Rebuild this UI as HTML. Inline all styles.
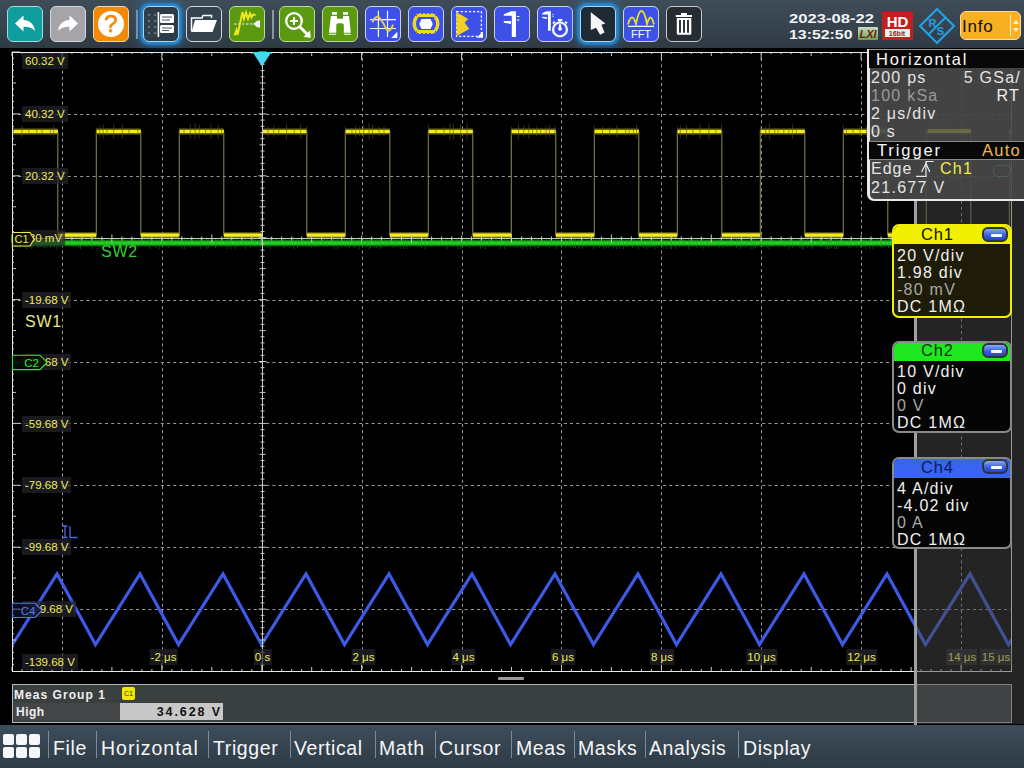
<!DOCTYPE html>
<html><head><meta charset="utf-8">
<style>
*{margin:0;padding:0;box-sizing:border-box}
html,body{width:1024px;height:768px;overflow:hidden;background:#000;font-family:"Liberation Sans",sans-serif}
.abs{position:absolute}
#tb{position:absolute;left:0;top:0;width:1024px;height:48px;background:linear-gradient(#3f4d58,#2f3a44)}
.btn{position:absolute;top:6px;width:36px;height:36px;border-radius:6px;border:1.5px solid #d8dde2;overflow:hidden}
.btn svg{position:absolute;left:-1.5px;top:-1.5px;width:36px;height:36px}
.sep{position:absolute;top:10px;width:2px;height:29px;background:#8a98a6}
.glow{box-shadow:0 0 2px 3px rgba(40,140,215,0.85),0 0 8px 5px rgba(35,125,200,0.55)}
#menu{position:absolute;left:0;top:725px;width:1024px;height:43px;background:linear-gradient(#3d4d5a,#2e3b46)}
.mi{position:absolute;top:736.5px;font-size:19.5px;color:#f4f6f8;letter-spacing:0.6px;white-space:nowrap}
.ms{position:absolute;top:731px;width:1px;height:27px;background:#7d8b98}
.vl{position:absolute;height:16px;background:rgba(36,36,44,0.7);color:#eeec58;font-size:11.5px;line-height:16px;white-space:nowrap;padding:0 3px}
.xl{padding:0 1.5px;transform:translateX(-50%)}
.panel{position:absolute;color:#e8e8e8;font-size:16px;white-space:nowrap}
</style></head><body>
<div id="tb"></div>
<!-- buttons -->
<div class="btn" style="left:7px;background:#0f9d9e;border-color:#9edede"><svg viewBox="0 0 36 36"><path d="M8 17.5 L16.5 9.5 V14 C22 14 27 17.5 28 25 C25 21.5 21 20.5 16.5 20.8 V25.5 Z" fill="#fff"/></svg></div>
<div class="btn" style="left:50px;background:#a5a5a9;border-color:#d6d6de"><svg viewBox="0 0 36 36"><path d="M28 17.5 L19.5 9.5 V14 C14 14 9 17.5 8 25 C11 21.5 15 20.5 19.5 20.8 V25.5 Z" fill="#fff"/></svg></div>
<div class="btn" style="left:93px;background:#f28a08;border-color:#f6d8a8"><svg viewBox="0 0 36 36"><circle cx="18" cy="18" r="13" fill="#fff"/><text x="18" y="26" text-anchor="middle" font-family="Liberation Sans" font-size="24" fill="#f28a08" stroke="#f28a08" stroke-width="0.6">?</text></svg></div>
<div class="sep" style="left:136px"></div>
<div class="btn glow" style="left:143px;background:#2e3c48;border-color:#a8d8f8"><svg viewBox="0 0 36 36"><path d="M4.5 9h3M6 7.5v3" stroke="#7a8896" stroke-width="0.8"/><path d="M4.5 15h3M6 13.5v3" stroke="#7a8896" stroke-width="0.8"/><path d="M4.5 21h3M6 19.5v3" stroke="#7a8896" stroke-width="0.8"/><path d="M4.5 27h3M6 25.5v3" stroke="#7a8896" stroke-width="0.8"/><path d="M10.5 9h3M12 7.5v3" stroke="#7a8896" stroke-width="0.8"/><path d="M10.5 15h3M12 13.5v3" stroke="#7a8896" stroke-width="0.8"/><path d="M10.5 21h3M12 19.5v3" stroke="#7a8896" stroke-width="0.8"/><path d="M10.5 27h3M12 25.5v3" stroke="#7a8896" stroke-width="0.8"/><circle cx="3" cy="12" r="0.6" fill="#6a7886"/><circle cx="3" cy="18" r="0.6" fill="#6a7886"/><circle cx="3" cy="24" r="0.6" fill="#6a7886"/><circle cx="3" cy="30" r="0.6" fill="#6a7886"/><circle cx="9" cy="12" r="0.6" fill="#6a7886"/><circle cx="9" cy="18" r="0.6" fill="#6a7886"/><circle cx="9" cy="24" r="0.6" fill="#6a7886"/><circle cx="9" cy="30" r="0.6" fill="#6a7886"/><rect x="14.6" y="6" width="1.6" height="25" fill="#fff"/><rect x="17" y="8" width="14" height="9" rx="1.5" fill="#fff"/><rect x="17" y="19" width="14" height="8" rx="1.5" fill="#fff"/><path d="M19 11h10M19 14h8M19 22h10M19 24.5h7" stroke="#3a4652" stroke-width="0.9"/></svg></div>
<div class="btn" style="left:186px;background:#34434e;border-color:#d0d6dc"><svg viewBox="0 0 36 36"><path d="M5.5 25.5 V12 H16 L17 9.5 H25.5 V12" fill="none" stroke="#fff" stroke-width="1.5"/><path d="M9 14 H31 L26.5 26 H5.5 Z" fill="#fff"/></svg></div>
<div class="btn" style="left:229px;background:#5b9a10;border-color:#b8dc98"><svg viewBox="0 0 36 36"><path d="M5 18 H24" stroke="#f0f0f0" stroke-width="1" stroke-dasharray="2.5 1.5"/><path d="M24 18 L28.5 14.5 H31 V21.5 H28.5 Z" fill="#f0f0f0"/><path d="M5.5 29.5 L7.5 24 L8.5 29 L13.5 6 L15 13 L17 6.5 L19 13 L21 7.5 L22.5 11.5 L24 8.5 L26.5 9" fill="none" stroke="#f2e820" stroke-width="1.9" stroke-linejoin="miter"/></svg></div>
<div class="sep" style="left:272px"></div>
<div class="btn" style="left:279px;background:#5b9a10;border-color:#b8dc98"><svg viewBox="0 0 36 36"><circle cx="15" cy="15" r="7.8" fill="none" stroke="#fff" stroke-width="2.3"/><path d="M15 11V19M11 15H19" stroke="#fff" stroke-width="2"/><path d="M20.8 20.8 L28.5 28.5" stroke="#fff" stroke-width="3"/><path d="M31.8 31.8 L24.5 31 L31 24.5 Z" fill="#fff"/></svg></div>
<div class="btn" style="left:322px;background:#5b9a10;border-color:#b8dc98"><svg viewBox="0 0 36 36"><path d="M10 6.1H15V8.7H10ZM21 6.1H26V8.7H21Z" fill="#fff"/><path d="M8.9 10 H15 V12.7 H21 V10 H27 L28.8 26.8 H21.8 V19 C21.8 17.6 20 17.3 18 17.3 C16 17.3 14.3 17.6 14.3 19 V26.8 H7 Z" fill="#fff"/><path d="M7 28.3H14M21.8 28.3H28.8" stroke="#fff" stroke-width="1.1"/></svg></div>
<div class="btn" style="left:365px;background:#3d50e8;border-color:#c8d0f8"><svg viewBox="0 0 36 36"><path d="M13.4 4.7V31M22.5 4.7V31M4.9 13.6H31M4.9 22.5H31" stroke="#fff" stroke-width="1.2"/><path d="M7.5 16.4 C9 12.5 10.5 10.8 12.4 10.8 C15 10.8 16.5 15 18.7 17.8 C20.5 21.5 21.5 24.8 23.4 24.8 C25.5 24.8 27 21 28.1 18.7" fill="none" stroke="#e0d040" stroke-width="1.9"/><path d="M32.3 25.8V31.9H26.3Z" fill="#fff"/></svg></div>
<div class="btn" style="left:408px;background:#3d50e8;border-color:#c8d0f8"><svg viewBox="0 0 36 36"><path d="M8.7 9.2 H27.2 M8.7 26 H27.2" stroke="#f0d820" stroke-width="3.8"/><path d="M9 7.6 H27 M9 27.6 H27" stroke="#3d50e8" stroke-width="1" stroke-dasharray="2 2"/><path d="M8.7 10.5 Q3.8 17.8 8.7 24.8 M27.3 10.5 Q32.2 17.8 27.3 24.8" fill="none" stroke="#f0d820" stroke-width="3.4"/><path d="M11.2 17.9 L13.5 12.9 H22.5 L24.8 17.9 L22.5 23 H13.5 Z" fill="#fff"/></svg></div>
<div class="btn" style="left:451px;background:#3d50e8;border-color:#c8d0f8"><svg viewBox="0 0 36 36"><rect x="5.6" y="5.6" width="24.8" height="24.8" fill="none" stroke="#fff" stroke-width="1.3" stroke-dasharray="2.2 1.9"/><path d="M5.2 6.1 L17.3 13.1 L13.6 16.4 L18.3 23 L5.6 30 Z" fill="#f0d020"/><path d="M32 25.5V31.8H25.7Z" fill="#fff"/></svg></div>
<div class="btn" style="left:494px;background:#3d50e8;border-color:#c8d0f8"><svg viewBox="0 0 36 36"><path d="M9.8 8.3 L17 5.2 H22 V31 H17.8 V9.8 H9.8 Z" fill="#fff"/><path d="M9.8 15 H17 V18 L9.8 16.8 Z" fill="#fff"/><path d="M23 10.5h2.3M23 14h2.3" stroke="#fff" stroke-width="1.1"/></svg></div>
<div class="btn" style="left:537px;background:#3d50e8;border-color:#c8d0f8"><svg viewBox="0 0 36 36"><path d="M5.2 7.2 L9.4 5.2 H13.8 V24.8 H11 V8.6 H5.2 Z" fill="#fff"/><path d="M5.2 10.8 L10 11.2 V12.9 L5.2 11.9 Z" fill="#fff"/><path d="M15.4 8.4h1.2M15.4 10.3h1.2" stroke="#fff" stroke-width="0.9"/><circle cx="23" cy="23.4" r="6.9" fill="none" stroke="#fff" stroke-width="2.2"/><path d="M23 14.5 V17 M20.8 14 H25.3 M16 17.5 L17.8 15.5 M30 17.5 L28.2 15.5" stroke="#fff" stroke-width="1.8"/><path d="M23 18.3 V22" stroke="#fff" stroke-width="2.2"/><circle cx="23" cy="22.8" r="1.9" fill="#fff"/></svg></div>
<div class="btn glow" style="left:580px;background:#202a34;border-color:#a8d8f8"><svg viewBox="0 0 36 36"><path d="M10.8 6.2 V24 L16 21.8 L20.1 28.7 L24.5 26.5 L21.4 18.7 L25.4 17.4 Z" fill="#f6f6f6"/></svg></div>
<div class="btn" style="left:623px;background:#3d50e8;border-color:#c8d0f8"><svg viewBox="0 0 36 36"><path d="M5 18.5 C6.5 13 8 11 9.5 11.5 C11 12 12 15 13 18 C14.5 10 16.5 5 18.5 5 C20.5 5 22.5 10 24 18 C25 15 26 11.5 27.5 11.5 C29 11.5 30 15 31 18.5" fill="none" stroke="#e8e020" stroke-width="1.8"/><path d="M5 20.3H31" stroke="#fff" stroke-width="1.3"/><text x="18" y="32" text-anchor="middle" font-family="Liberation Sans" font-size="11" fill="#fff">FFT</text></svg></div>
<div class="btn" style="left:666px;background:#262c32;border-color:#c8ccd2"><svg viewBox="0 0 36 36"><path d="M9.8 8.9 H26 V11.1 H9.8 Z M15 7 H20.9 V8.9 H15Z" fill="#fff"/><path d="M10.8 11.9 H25.3 V27.8 Q25.3 28.8 24.3 28.8 H11.8 Q10.8 28.8 10.8 27.8 Z" fill="#fff"/><path d="M14 14 V26.7 M18 14 V26.7 M22 14 V26.7" stroke="#262c32" stroke-width="1.9"/></svg></div>
<!-- date/time -->
<div class="abs" style="left:789px;top:11.5px;font-size:12.7px;font-weight:bold;color:#f2f4f6;line-height:15px;transform:scaleX(1.31);transform-origin:0 0">2023-08-22</div>
<div class="abs" style="left:789px;top:27.5px;font-size:12.7px;font-weight:bold;color:#f2f4f6;line-height:15px;transform:scaleX(1.25);transform-origin:0 0">13:52:50</div>
<div class="abs" style="left:858px;top:27px;width:20px;height:13px;background:linear-gradient(#c8dcc0,#6aa050);border-radius:1px"><svg width="20" height="13" viewBox="0 0 20 13" style="position:absolute;left:0;top:0"><text x="10" y="11" text-anchor="middle" font-family="Liberation Sans" font-weight="bold" font-style="italic" font-size="11" fill="#6a2010">LXI</text></svg></div>
<div class="abs" style="left:882px;top:12px;width:31px;height:28px;background:#c41e1e"><svg width="31" height="28" viewBox="0 0 31 28" style="position:absolute;left:0;top:0"><text x="15.5" y="15" text-anchor="middle" font-family="Liberation Sans" font-weight="bold" font-size="15" fill="#fff">HD</text><rect x="3" y="17" width="25" height="8" fill="#f4f0f0"/><text x="15" y="24" text-anchor="middle" font-family="Liberation Sans" font-weight="bold" font-size="7" fill="#a02020">16bit</text></svg></div>
<svg class="abs" style="left:918px;top:7px" width="38" height="38" viewBox="0 0 38 38"><path d="M19 2 L36 19 L19 36 L2 19 Z" fill="none" stroke="#22a0e8" stroke-width="2.2"/><path d="M27.5 10.5 L10.5 27.5" stroke="#22a0e8" stroke-width="2"/><text x="14.5" y="19.5" text-anchor="middle" font-family="Liberation Sans" font-weight="bold" font-size="11" fill="#22a0e8">R</text><text x="22.5" y="28" text-anchor="middle" font-family="Liberation Sans" font-weight="bold" font-size="11" fill="#22a0e8">S</text></svg>
<div class="abs" style="left:960px;top:11px;width:61px;height:29px;background:#f6b022;border:1.5px solid #f8dca0;border-radius:6px"><div class="abs" style="left:1px;top:4.5px;font-size:17px;color:#101010;letter-spacing:0.8px">Info</div><div class="abs" style="left:49px;top:3px;width:1px;height:21px;background:#fbe6b8"></div><svg class="abs" style="left:51px;top:7px" width="8" height="14" viewBox="0 0 8 14"><path d="M4 1L7 5H1Z M4 13L7 9H1Z" fill="#fdf0d0"/></svg></div>

<!-- scope display -->
<svg class="abs" style="left:0;top:0" width="1024" height="768" viewBox="0 0 1024 768">
<line x1="62.5" y1="52" x2="62.5" y2="671" stroke="#9a9a9a" stroke-width="1" stroke-dasharray="3 3.2"/>
<line x1="162.5" y1="52" x2="162.5" y2="671" stroke="#9a9a9a" stroke-width="1" stroke-dasharray="3 3.2"/>
<line x1="362.5" y1="52" x2="362.5" y2="671" stroke="#9a9a9a" stroke-width="1" stroke-dasharray="3 3.2"/>
<line x1="462.5" y1="52" x2="462.5" y2="671" stroke="#9a9a9a" stroke-width="1" stroke-dasharray="3 3.2"/>
<line x1="561.5" y1="52" x2="561.5" y2="671" stroke="#9a9a9a" stroke-width="1" stroke-dasharray="3 3.2"/>
<line x1="661.5" y1="52" x2="661.5" y2="671" stroke="#9a9a9a" stroke-width="1" stroke-dasharray="3 3.2"/>
<line x1="761.5" y1="52" x2="761.5" y2="671" stroke="#9a9a9a" stroke-width="1" stroke-dasharray="3 3.2"/>
<line x1="861.5" y1="52" x2="861.5" y2="671" stroke="#9a9a9a" stroke-width="1" stroke-dasharray="3 3.2"/>
<line x1="961.5" y1="52" x2="961.5" y2="671" stroke="#9a9a9a" stroke-width="1" stroke-dasharray="3 3.2"/>
<line x1="12" y1="114.5" x2="1011" y2="114.5" stroke="#9a9a9a" stroke-width="1" stroke-dasharray="3 3.2"/>
<line x1="12" y1="176.5" x2="1011" y2="176.5" stroke="#9a9a9a" stroke-width="1" stroke-dasharray="3 3.2"/>
<line x1="12" y1="300.5" x2="1011" y2="300.5" stroke="#9a9a9a" stroke-width="1" stroke-dasharray="3 3.2"/>
<line x1="12" y1="362.5" x2="1011" y2="362.5" stroke="#9a9a9a" stroke-width="1" stroke-dasharray="3 3.2"/>
<line x1="12" y1="423.5" x2="1011" y2="423.5" stroke="#9a9a9a" stroke-width="1" stroke-dasharray="3 3.2"/>
<line x1="12" y1="485.5" x2="1011" y2="485.5" stroke="#9a9a9a" stroke-width="1" stroke-dasharray="3 3.2"/>
<line x1="12" y1="547.5" x2="1011" y2="547.5" stroke="#9a9a9a" stroke-width="1" stroke-dasharray="3 3.2"/>
<line x1="12" y1="609.5" x2="1011" y2="609.5" stroke="#9a9a9a" stroke-width="1" stroke-dasharray="3 3.2"/>

</svg>
<svg class="abs" style="left:0;top:0" width="1024" height="768" viewBox="0 0 1024 768">
<defs><clipPath id="gclip"><rect x="12" y="52" width="1000" height="620"/></clipPath></defs>
<path d="M12.5 644.5 L57.0 574 L95.5 644.5 L140.0 574 L178.5 644.5 L223.0 574 L261.5 644.5 L306.0 574 L344.5 644.5 L389.0 574 L427.5 644.5 L472.0 574 L510.5 644.5 L555.0 574 L593.5 644.5 L638.0 574 L676.5 644.5 L721.0 574 L759.5 644.5 L804.0 574 L842.5 644.5 L887.0 574 L925.5 644.5 L970.0 574 L1008.5 644.5 L1053.0 574 L1091.5 644.5 L1136.0 574" stroke="#3c5ae6" stroke-width="3.2" fill="none" stroke-linejoin="miter" clip-path="url(#gclip)"/>
<path d="M57.8 131.5V235.2 M96.3 131.5V235.2 M140.8 131.5V235.2 M179.3 131.5V235.2 M223.8 131.5V235.2 M262.3 131.5V235.2 M306.8 131.5V235.2 M345.3 131.5V235.2 M389.8 131.5V235.2 M428.3 131.5V235.2 M472.8 131.5V235.2 M511.3 131.5V235.2 M555.8 131.5V235.2 M594.3 131.5V235.2 M638.8 131.5V235.2 M677.3 131.5V235.2 M721.8 131.5V235.2 M760.3 131.5V235.2 M804.8 131.5V235.2 M843.3 131.5V235.2 M887.8 131.5V235.2 M926.3 131.5V235.2 M970.8 131.5V235.2 M1009.3 131.5V235.2" stroke="#908a50" stroke-width="1" fill="none"/>
<path d="M13.3 131.5H57.8 M96.3 131.5H140.8 M179.3 131.5H223.8 M262.3 131.5H306.8 M345.3 131.5H389.8 M428.3 131.5H472.8 M511.3 131.5H555.8 M594.3 131.5H638.8 M677.3 131.5H721.8 M760.3 131.5H804.8 M843.3 131.5H887.8 M926.3 131.5H970.8 M1009.3 131.5H1011.0 M57.8 235.2H96.3 M140.8 235.2H179.3 M223.8 235.2H262.3 M306.8 235.2H345.3 M389.8 235.2H428.3 M472.8 235.2H511.3 M555.8 235.2H594.3 M638.8 235.2H677.3 M721.8 235.2H760.3 M804.8 235.2H843.3 M887.8 235.2H926.3 M970.8 235.2H1009.3" stroke="#6a6418" stroke-width="6" fill="none"/>
<path d="M13.3 131.5H57.8 M96.3 131.5H140.8 M179.3 131.5H223.8 M262.3 131.5H306.8 M345.3 131.5H389.8 M428.3 131.5H472.8 M511.3 131.5H555.8 M594.3 131.5H638.8 M677.3 131.5H721.8 M760.3 131.5H804.8 M843.3 131.5H887.8 M926.3 131.5H970.8 M1009.3 131.5H1011.0 M57.8 235.2H96.3 M140.8 235.2H179.3 M223.8 235.2H262.3 M306.8 235.2H345.3 M389.8 235.2H428.3 M472.8 235.2H511.3 M555.8 235.2H594.3 M638.8 235.2H677.3 M721.8 235.2H760.3 M804.8 235.2H843.3 M887.8 235.2H926.3 M970.8 235.2H1009.3" stroke="#f4ec20" stroke-width="3.2" fill="none"/>
<path d="M13.3 126.5v10 M22.0 125.5v12 M28.9 128.5v6 M36.8 128.5v6 M42.0 128.5v6 M50.5 127.5v8 M53.7 125.5v12 M96.3 127.5v8 M99.8 125.5v12 M103.2 124.5v14 M106.9 127.5v8 M113.7 124.5v14 M122.4 124.5v14 M128.9 128.5v6 M137.8 128.5v6 M179.3 127.5v8 M184.0 127.5v8 M190.3 124.5v14 M195.1 123.5v16 M199.2 124.5v14 M205.6 127.5v8 M210.9 124.5v14 M218.2 124.5v14 M221.5 127.5v8 M262.3 124.5v14 M267.9 126.5v10 M273.7 125.5v12 M278.8 127.5v8 M286.6 123.5v16 M294.3 128.5v6 M300.7 124.5v14 M306.7 126.5v10 M345.3 126.5v10 M352.0 128.5v6 M355.7 125.5v12 M359.7 126.5v10 M363.6 125.5v12 M369.1 123.5v16 M372.6 124.5v14 M379.0 126.5v10 M384.0 126.5v10 M428.3 124.5v14 M436.1 128.5v6 M444.1 126.5v10 M450.0 123.5v16 M453.4 123.5v16 M460.6 123.5v16 M467.0 123.5v16 M511.3 126.5v10 M518.6 123.5v16 M523.7 125.5v12 M528.8 124.5v14 M532.5 128.5v6 M536.8 126.5v10 M540.6 127.5v8 M546.0 125.5v12 M549.5 125.5v12 M554.9 126.5v10 M594.3 125.5v12 M602.5 126.5v10 M609.7 126.5v10 M616.8 125.5v12 M625.6 127.5v8 M629.1 127.5v8 M633.5 127.5v8 M636.5 124.5v14 M677.3 126.5v10 M680.3 125.5v12 M686.5 124.5v14 M692.9 127.5v8 M700.1 124.5v14 M708.8 123.5v16 M715.8 128.5v6 M721.6 123.5v16 M760.3 125.5v12 M765.7 125.5v12 M769.3 123.5v16 M774.7 127.5v8 M778.1 127.5v8 M783.8 128.5v6 M788.8 128.5v6 M792.4 124.5v14 M796.3 128.5v6 M843.3 124.5v14 M846.5 127.5v8 M853.1 127.5v8 M859.9 126.5v10 M866.6 125.5v12 M870.3 125.5v12 M879.3 125.5v12 M885.1 126.5v10 M926.3 128.5v6 M933.8 123.5v16 M938.4 123.5v16 M942.4 128.5v6 M946.6 124.5v14 M951.8 123.5v16 M958.0 128.5v6 M965.6 126.5v10 M1009.3 128.5v6" stroke="#5a5424" stroke-width="0.6" fill="none"/>
<path d="M12 243H1011" stroke="#0e6a0e" stroke-width="6.5" fill="none"/>
<path d="M12 243H1011" stroke="#26d626" stroke-width="3.5" fill="none"/>
<path d="M12.0 238v10 M14.8 239v8 M17.2 239v8 M20.0 238v10 M23.1 239v8 M26.6 237v12 M30.0 239v8 M32.0 237v12 M34.4 240v6 M38.3 238v10 M41.0 239v8 M44.2 238v10 M46.9 238v10 M50.8 238v10 M52.5 240v6 M54.5 239v8 M56.9 237v12 M59.9 240v6 M62.6 238v10 M66.1 240v6 M69.7 240v6 M73.5 239v8 M76.2 239v8 M78.8 238v10 M80.5 237v12 M83.1 240v6 M86.5 239v8 M90.4 240v6 M92.3 237v12 M95.8 239v8 M98.9 237v12 M102.0 238v10 M103.9 239v8 M105.4 240v6 M108.3 239v8 M110.8 239v8 M114.4 239v8 M116.0 239v8 M118.2 239v8 M121.6 238v10 M123.8 237v12 M127.4 240v6 M131.1 238v10 M134.9 237v12 M138.4 239v8 M141.3 240v6 M145.0 239v8 M148.0 239v8 M149.9 237v12 M153.0 240v6 M155.8 238v10 M159.1 237v12 M162.5 240v6 M166.2 240v6 M168.3 238v10 M169.9 240v6 M172.7 240v6 M176.1 240v6 M178.7 239v8 M182.0 237v12 M184.7 237v12 M187.5 239v8 M190.7 238v10 M194.6 239v8 M198.2 239v8 M200.7 237v12 M203.3 240v6 M206.5 237v12 M208.2 238v10 M211.6 239v8 M215.5 238v10 M217.3 239v8 M221.2 239v8 M224.6 240v6 M227.1 237v12 M229.0 239v8 M230.9 237v12 M234.9 237v12 M237.2 239v8 M239.6 240v6 M242.9 240v6 M245.3 237v12 M247.9 240v6 M250.4 238v10 M253.1 240v6 M254.9 239v8 M258.8 240v6 M260.6 238v10 M262.2 239v8 M264.3 239v8 M267.9 238v10 M270.4 237v12 M273.6 240v6 M275.8 239v8 M278.4 240v6 M280.6 240v6 M283.7 238v10 M285.4 239v8 M287.0 240v6 M289.7 238v10 M293.7 237v12 M297.5 238v10 M300.5 240v6 M303.3 239v8 M307.2 239v8 M309.3 239v8 M311.4 238v10 M314.4 239v8 M316.7 239v8 M318.8 240v6 M322.8 240v6 M324.4 239v8 M327.1 239v8 M331.0 240v6 M334.1 237v12 M337.3 237v12 M341.2 238v10 M344.4 239v8 M346.8 239v8 M349.3 238v10 M353.2 239v8 M354.8 238v10 M357.3 240v6 M359.1 237v12 M362.7 238v10 M365.7 238v10 M367.3 239v8 M369.2 237v12 M370.7 238v10 M374.6 238v10 M376.8 238v10 M378.8 239v8 M380.3 237v12 M382.0 238v10 M384.8 239v8 M386.9 240v6 M388.6 240v6 M390.5 240v6 M393.0 238v10 M395.2 239v8 M396.9 239v8 M400.1 237v12 M403.5 237v12 M405.4 239v8 M407.0 237v12 M410.3 239v8 M414.1 240v6 M417.6 239v8 M419.4 240v6 M421.2 238v10 M425.1 237v12 M428.7 240v6 M431.8 239v8 M434.5 240v6 M437.1 240v6 M440.5 240v6 M443.6 240v6 M447.0 237v12 M449.1 240v6 M452.7 239v8 M456.1 239v8 M458.1 237v12 M460.9 237v12 M462.6 238v10 M466.0 239v8 M467.7 239v8 M470.0 238v10 M473.1 239v8 M474.6 240v6 M477.3 240v6 M480.5 237v12 M482.8 238v10 M485.4 237v12 M488.8 239v8 M491.1 240v6 M495.0 240v6 M497.2 240v6 M500.7 237v12 M504.7 237v12 M506.8 239v8 M508.4 240v6 M510.3 238v10 M514.2 239v8 M517.2 238v10 M520.9 238v10 M523.0 237v12 M525.5 239v8 M527.0 237v12 M530.2 237v12 M532.4 239v8 M535.0 237v12 M537.3 238v10 M538.8 238v10 M542.4 240v6 M546.2 239v8 M549.5 238v10 M551.6 240v6 M554.1 240v6 M556.5 237v12 M559.9 240v6 M562.1 240v6 M565.7 238v10 M568.8 239v8 M570.9 238v10 M573.5 238v10 M575.5 238v10 M578.9 237v12 M582.6 237v12 M586.4 239v8 M589.7 240v6 M593.6 237v12 M596.2 239v8 M599.3 238v10 M602.0 239v8 M603.9 237v12 M606.3 238v10 M608.4 238v10 M611.0 239v8 M613.2 237v12 M615.0 239v8 M616.7 237v12 M619.6 237v12 M623.3 237v12 M625.9 239v8 M628.0 239v8 M630.4 240v6 M632.7 238v10 M634.8 239v8 M638.5 237v12 M641.0 239v8 M643.4 238v10 M646.8 237v12 M649.0 238v10 M650.8 239v8 M652.5 239v8 M655.0 237v12 M657.6 238v10 M661.2 240v6 M663.0 237v12 M666.3 237v12 M670.2 237v12 M671.7 237v12 M675.5 237v12 M679.5 239v8 M682.9 239v8 M684.8 240v6 M688.7 237v12 M690.4 240v6 M691.9 239v8 M694.0 240v6 M697.1 238v10 M701.0 238v10 M703.8 237v12 M707.1 240v6 M708.8 238v10 M711.6 239v8 M714.1 239v8 M717.6 240v6 M719.1 238v10 M723.1 238v10 M727.0 239v8 M729.7 239v8 M732.5 240v6 M736.4 238v10 M738.1 239v8 M740.8 237v12 M742.5 239v8 M745.7 238v10 M747.8 240v6 M751.0 237v12 M753.4 237v12 M755.4 238v10 M758.7 240v6 M760.8 239v8 M763.0 239v8 M765.1 239v8 M767.3 238v10 M769.1 237v12 M772.1 239v8 M774.8 240v6 M778.7 239v8 M782.5 240v6 M784.5 239v8 M787.0 240v6 M789.0 237v12 M792.7 238v10 M796.1 240v6 M799.9 238v10 M801.9 237v12 M803.5 237v12 M807.1 238v10 M809.7 240v6 M811.2 238v10 M812.9 237v12 M816.8 240v6 M819.7 239v8 M822.1 238v10 M825.7 237v12 M827.4 237v12 M829.4 237v12 M831.4 238v10 M834.7 237v12 M836.3 237v12 M838.4 237v12 M840.0 240v6 M842.7 240v6 M844.8 240v6 M848.6 238v10 M851.0 238v10 M854.9 240v6 M857.0 238v10 M860.8 238v10 M862.3 240v6 M863.9 239v8 M865.7 237v12 M869.5 237v12 M873.0 237v12 M876.6 239v8 M880.4 239v8 M881.9 238v10 M885.5 239v8 M888.5 238v10 M892.1 237v12 M894.5 240v6 M897.3 237v12 M900.7 239v8 M903.2 240v6 M905.9 238v10 M907.8 237v12 M911.5 240v6 M913.7 240v6 M915.7 237v12 M918.5 237v12 M920.4 239v8 M922.9 239v8 M926.3 240v6 M929.7 238v10 M932.0 238v10 M934.4 238v10 M936.4 239v8 M938.4 239v8 M940.3 239v8 M942.6 237v12 M944.7 239v8 M947.5 239v8 M950.6 240v6 M953.7 240v6 M955.5 237v12 M959.2 239v8 M962.8 238v10 M964.4 238v10 M966.5 240v6 M968.5 239v8 M972.3 238v10 M975.1 239v8 M977.7 238v10 M981.1 240v6 M982.9 238v10 M984.9 238v10 M987.3 240v6 M989.3 238v10 M990.9 239v8 M994.4 238v10 M996.9 238v10 M998.9 238v10 M1000.6 240v6 M1004.1 237v12 M1005.7 240v6 M1009.2 239v8" stroke="#18a018" stroke-width="0.8" fill="none" opacity="0.6"/>

<line x1="262.5" y1="52" x2="262.5" y2="671" stroke="#c8c8c8" stroke-width="1"/>
<line x1="12" y1="238.5" x2="1011" y2="238.5" stroke="#c8c8c8" stroke-width="1"/>
<path d="M258.5 52.0h8 M12 52.0h8 M260.5 58.2h4 M12 58.2h2 M260.5 64.4h4 M12 64.4h2 M260.5 70.6h4 M12 70.6h2 M260.5 76.8h4 M12 76.8h2 M259.5 83.0h6 M12 83.0h4 M260.5 89.1h4 M12 89.1h2 M260.5 95.3h4 M12 95.3h2 M260.5 101.5h4 M12 101.5h2 M260.5 107.7h4 M12 107.7h2 M258.5 113.9h8 M12 113.9h8 M260.5 120.1h4 M12 120.1h2 M260.5 126.3h4 M12 126.3h2 M260.5 132.5h4 M12 132.5h2 M260.5 138.7h4 M12 138.7h2 M259.5 144.8h6 M12 144.8h4 M260.5 151.0h4 M12 151.0h2 M260.5 157.2h4 M12 157.2h2 M260.5 163.4h4 M12 163.4h2 M260.5 169.6h4 M12 169.6h2 M258.5 175.8h8 M12 175.8h8 M260.5 182.0h4 M12 182.0h2 M260.5 188.2h4 M12 188.2h2 M260.5 194.4h4 M12 194.4h2 M260.5 200.6h4 M12 200.6h2 M259.5 206.8h6 M12 206.8h4 M260.5 212.9h4 M12 212.9h2 M260.5 219.1h4 M12 219.1h2 M260.5 225.3h4 M12 225.3h2 M260.5 231.5h4 M12 231.5h2 M258.5 237.7h8 M12 237.7h8 M260.5 243.9h4 M12 243.9h2 M260.5 250.1h4 M12 250.1h2 M260.5 256.3h4 M12 256.3h2 M260.5 262.5h4 M12 262.5h2 M259.5 268.6h6 M12 268.6h4 M260.5 274.8h4 M12 274.8h2 M260.5 281.0h4 M12 281.0h2 M260.5 287.2h4 M12 287.2h2 M260.5 293.4h4 M12 293.4h2 M258.5 299.6h8 M12 299.6h8 M260.5 305.8h4 M12 305.8h2 M260.5 312.0h4 M12 312.0h2 M260.5 318.2h4 M12 318.2h2 M260.5 324.4h4 M12 324.4h2 M259.5 330.6h6 M12 330.6h4 M260.5 336.7h4 M12 336.7h2 M260.5 342.9h4 M12 342.9h2 M260.5 349.1h4 M12 349.1h2 M260.5 355.3h4 M12 355.3h2 M258.5 361.5h8 M12 361.5h8 M260.5 367.7h4 M12 367.7h2 M260.5 373.9h4 M12 373.9h2 M260.5 380.1h4 M12 380.1h2 M260.5 386.3h4 M12 386.3h2 M259.5 392.4h6 M12 392.4h4 M260.5 398.6h4 M12 398.6h2 M260.5 404.8h4 M12 404.8h2 M260.5 411.0h4 M12 411.0h2 M260.5 417.2h4 M12 417.2h2 M258.5 423.4h8 M12 423.4h8 M260.5 429.6h4 M12 429.6h2 M260.5 435.8h4 M12 435.8h2 M260.5 442.0h4 M12 442.0h2 M260.5 448.2h4 M12 448.2h2 M259.5 454.4h6 M12 454.4h4 M260.5 460.5h4 M12 460.5h2 M260.5 466.7h4 M12 466.7h2 M260.5 472.9h4 M12 472.9h2 M260.5 479.1h4 M12 479.1h2 M258.5 485.3h8 M12 485.3h8 M260.5 491.5h4 M12 491.5h2 M260.5 497.7h4 M12 497.7h2 M260.5 503.9h4 M12 503.9h2 M260.5 510.1h4 M12 510.1h2 M259.5 516.2h6 M12 516.2h4 M260.5 522.4h4 M12 522.4h2 M260.5 528.6h4 M12 528.6h2 M260.5 534.8h4 M12 534.8h2 M260.5 541.0h4 M12 541.0h2 M258.5 547.2h8 M12 547.2h8 M260.5 553.4h4 M12 553.4h2 M260.5 559.6h4 M12 559.6h2 M260.5 565.8h4 M12 565.8h2 M260.5 572.0h4 M12 572.0h2 M259.5 578.1h6 M12 578.1h4 M260.5 584.3h4 M12 584.3h2 M260.5 590.5h4 M12 590.5h2 M260.5 596.7h4 M12 596.7h2 M260.5 602.9h4 M12 602.9h2 M258.5 609.1h8 M12 609.1h8 M260.5 615.3h4 M12 615.3h2 M260.5 621.5h4 M12 621.5h2 M260.5 627.7h4 M12 627.7h2 M260.5 633.9h4 M12 633.9h2 M259.5 640.0h6 M12 640.0h4 M260.5 646.2h4 M12 646.2h2 M260.5 652.4h4 M12 652.4h2 M260.5 658.6h4 M12 658.6h2 M260.5 664.8h4 M12 664.8h2 M12.0 234.5v8 M12.0 52v4 M12.0 671v-4 M22.0 236.5v4 M22.0 52v2 M22.0 671v-2 M32.0 236.5v4 M32.0 52v2 M32.0 671v-2 M42.0 236.5v4 M42.0 52v2 M42.0 671v-2 M52.0 236.5v4 M52.0 52v2 M52.0 671v-2 M62.0 235.5v6 M62.0 52v8 M62.0 671v-8 M71.9 236.5v4 M71.9 52v2 M71.9 671v-2 M81.9 236.5v4 M81.9 52v2 M81.9 671v-2 M91.9 236.5v4 M91.9 52v2 M91.9 671v-2 M101.9 236.5v4 M101.9 52v2 M101.9 671v-2 M111.9 234.5v8 M111.9 52v4 M111.9 671v-4 M121.9 236.5v4 M121.9 52v2 M121.9 671v-2 M131.9 236.5v4 M131.9 52v2 M131.9 671v-2 M141.9 236.5v4 M141.9 52v2 M141.9 671v-2 M151.9 236.5v4 M151.9 52v2 M151.9 671v-2 M161.8 235.5v6 M161.8 52v8 M161.8 671v-8 M171.8 236.5v4 M171.8 52v2 M171.8 671v-2 M181.8 236.5v4 M181.8 52v2 M181.8 671v-2 M191.8 236.5v4 M191.8 52v2 M191.8 671v-2 M201.8 236.5v4 M201.8 52v2 M201.8 671v-2 M211.8 234.5v8 M211.8 52v4 M211.8 671v-4 M221.8 236.5v4 M221.8 52v2 M221.8 671v-2 M231.8 236.5v4 M231.8 52v2 M231.8 671v-2 M241.8 236.5v4 M241.8 52v2 M241.8 671v-2 M251.8 236.5v4 M251.8 52v2 M251.8 671v-2 M261.8 235.5v6 M261.8 52v8 M261.8 671v-8 M271.7 236.5v4 M271.7 52v2 M271.7 671v-2 M281.7 236.5v4 M281.7 52v2 M281.7 671v-2 M291.7 236.5v4 M291.7 52v2 M291.7 671v-2 M301.7 236.5v4 M301.7 52v2 M301.7 671v-2 M311.7 234.5v8 M311.7 52v4 M311.7 671v-4 M321.7 236.5v4 M321.7 52v2 M321.7 671v-2 M331.7 236.5v4 M331.7 52v2 M331.7 671v-2 M341.7 236.5v4 M341.7 52v2 M341.7 671v-2 M351.7 236.5v4 M351.7 52v2 M351.7 671v-2 M361.6 235.5v6 M361.6 52v8 M361.6 671v-8 M371.6 236.5v4 M371.6 52v2 M371.6 671v-2 M381.6 236.5v4 M381.6 52v2 M381.6 671v-2 M391.6 236.5v4 M391.6 52v2 M391.6 671v-2 M401.6 236.5v4 M401.6 52v2 M401.6 671v-2 M411.6 234.5v8 M411.6 52v4 M411.6 671v-4 M421.6 236.5v4 M421.6 52v2 M421.6 671v-2 M431.6 236.5v4 M431.6 52v2 M431.6 671v-2 M441.6 236.5v4 M441.6 52v2 M441.6 671v-2 M451.6 236.5v4 M451.6 52v2 M451.6 671v-2 M461.6 235.5v6 M461.6 52v8 M461.6 671v-8 M471.5 236.5v4 M471.5 52v2 M471.5 671v-2 M481.5 236.5v4 M481.5 52v2 M481.5 671v-2 M491.5 236.5v4 M491.5 52v2 M491.5 671v-2 M501.5 236.5v4 M501.5 52v2 M501.5 671v-2 M511.5 234.5v8 M511.5 52v4 M511.5 671v-4 M521.5 236.5v4 M521.5 52v2 M521.5 671v-2 M531.5 236.5v4 M531.5 52v2 M531.5 671v-2 M541.5 236.5v4 M541.5 52v2 M541.5 671v-2 M551.5 236.5v4 M551.5 52v2 M551.5 671v-2 M561.5 235.5v6 M561.5 52v8 M561.5 671v-8 M571.4 236.5v4 M571.4 52v2 M571.4 671v-2 M581.4 236.5v4 M581.4 52v2 M581.4 671v-2 M591.4 236.5v4 M591.4 52v2 M591.4 671v-2 M601.4 236.5v4 M601.4 52v2 M601.4 671v-2 M611.4 234.5v8 M611.4 52v4 M611.4 671v-4 M621.4 236.5v4 M621.4 52v2 M621.4 671v-2 M631.4 236.5v4 M631.4 52v2 M631.4 671v-2 M641.4 236.5v4 M641.4 52v2 M641.4 671v-2 M651.4 236.5v4 M651.4 52v2 M651.4 671v-2 M661.4 235.5v6 M661.4 52v8 M661.4 671v-8 M671.3 236.5v4 M671.3 52v2 M671.3 671v-2 M681.3 236.5v4 M681.3 52v2 M681.3 671v-2 M691.3 236.5v4 M691.3 52v2 M691.3 671v-2 M701.3 236.5v4 M701.3 52v2 M701.3 671v-2 M711.3 234.5v8 M711.3 52v4 M711.3 671v-4 M721.3 236.5v4 M721.3 52v2 M721.3 671v-2 M731.3 236.5v4 M731.3 52v2 M731.3 671v-2 M741.3 236.5v4 M741.3 52v2 M741.3 671v-2 M751.3 236.5v4 M751.3 52v2 M751.3 671v-2 M761.2 235.5v6 M761.2 52v8 M761.2 671v-8 M771.2 236.5v4 M771.2 52v2 M771.2 671v-2 M781.2 236.5v4 M781.2 52v2 M781.2 671v-2 M791.2 236.5v4 M791.2 52v2 M791.2 671v-2 M801.2 236.5v4 M801.2 52v2 M801.2 671v-2 M811.2 234.5v8 M811.2 52v4 M811.2 671v-4 M821.2 236.5v4 M821.2 52v2 M821.2 671v-2 M831.2 236.5v4 M831.2 52v2 M831.2 671v-2 M841.2 236.5v4 M841.2 52v2 M841.2 671v-2 M851.2 236.5v4 M851.2 52v2 M851.2 671v-2 M861.1 235.5v6 M861.1 52v8 M861.1 671v-8 M871.1 236.5v4 M871.1 52v2 M871.1 671v-2 M881.1 236.5v4 M881.1 52v2 M881.1 671v-2 M891.1 236.5v4 M891.1 52v2 M891.1 671v-2 M901.1 236.5v4 M901.1 52v2 M901.1 671v-2 M911.1 234.5v8 M911.1 52v4 M911.1 671v-4 M921.1 236.5v4 M921.1 52v2 M921.1 671v-2 M931.1 236.5v4 M931.1 52v2 M931.1 671v-2 M941.1 236.5v4 M941.1 52v2 M941.1 671v-2 M951.1 236.5v4 M951.1 52v2 M951.1 671v-2 M961.0 235.5v6 M961.0 52v8 M961.0 671v-8 M971.0 236.5v4 M971.0 52v2 M971.0 671v-2 M981.0 236.5v4 M981.0 52v2 M981.0 671v-2 M991.0 236.5v4 M991.0 52v2 M991.0 671v-2 M1001.0 236.5v4 M1001.0 52v2 M1001.0 671v-2" stroke="#c8c8c8" stroke-width="1" fill="none"/>
<rect x="12.5" y="52.5" width="999" height="619" fill="none" stroke="#e8e8e8" stroke-width="1"/>
<path d="M252.5 52 H271.5 L262 66.5 Z" fill="#46d8f2"/>
</svg>
<!-- y labels -->
<div class="vl" style="left:22px;top:53px;color:transparent">60.32 V</div>
<div class="vl" style="left:22px;top:106px;color:transparent">40.32 V</div>
<div class="vl" style="left:22px;top:168px;color:transparent">20.32 V</div>
<div class="vl" style="left:22px;top:230px;color:transparent">-80 mV</div>
<div class="vl" style="left:22px;top:292px;color:transparent">-19.68 V</div>
<div class="vl" style="left:22px;top:354px;color:transparent">-39.68 V</div>
<div class="vl" style="left:22px;top:416px;color:transparent">-59.68 V</div>
<div class="vl" style="left:22px;top:477px;color:transparent">-79.68 V</div>
<div class="vl" style="left:22px;top:539px;color:transparent">-99.68 V</div>
<div class="vl" style="left:22px;top:601px;color:transparent;width:54px">9.68 V</div>
<div class="vl" style="left:22px;top:654px;color:transparent">-139.68 V</div>
<!-- x labels -->
<div class="vl xl" style="left:163.5px;top:649px;color:transparent">-2 μs</div>
<div class="vl xl" style="left:262.5px;top:649px;color:transparent">0 s</div>
<div class="vl xl" style="left:363.5px;top:649px;color:transparent">2 μs</div>
<div class="vl xl" style="left:463.5px;top:649px;color:transparent">4 μs</div>
<div class="vl xl" style="left:563px;top:649px;color:transparent">6 μs</div>
<div class="vl xl" style="left:662px;top:649px;color:transparent">8 μs</div>
<div class="vl xl" style="left:761.5px;top:649px;color:transparent">10 μs</div>
<div class="vl xl" style="left:861.5px;top:649px;color:transparent">12 μs</div>
<div class="vl xl" style="left:962px;top:649px;color:transparent">14 μs</div>
<div class="vl xl" style="left:996px;top:649px;color:transparent">15 μs</div>

<!-- y labels -->
<div class="vl" style="left:22px;top:53px;background:transparent">60.32 V</div>
<div class="vl" style="left:22px;top:106px;background:transparent">40.32 V</div>
<div class="vl" style="left:22px;top:168px;background:transparent">20.32 V</div>
<div class="vl" style="left:22px;top:230px;background:transparent">-80 mV</div>
<div class="vl" style="left:22px;top:292px;background:transparent">-19.68 V</div>
<div class="vl" style="left:22px;top:354px;background:transparent">-39.68 V</div>
<div class="vl" style="left:22px;top:416px;background:transparent">-59.68 V</div>
<div class="vl" style="left:22px;top:477px;background:transparent">-79.68 V</div>
<div class="vl" style="left:22px;top:539px;background:transparent">-99.68 V</div>
<div class="vl" style="left:22px;top:601px;background:transparent;width:54px;text-align:right;padding-right:3px">9.68 V</div>
<div class="vl" style="left:22px;top:654px;background:transparent">-139.68 V</div>
<!-- x labels -->
<div class="vl xl" style="left:163.5px;top:649px;background:transparent">-2 μs</div>
<div class="vl xl" style="left:262.5px;top:649px;background:transparent">0 s</div>
<div class="vl xl" style="left:363.5px;top:649px;background:transparent">2 μs</div>
<div class="vl xl" style="left:463.5px;top:649px;background:transparent">4 μs</div>
<div class="vl xl" style="left:563px;top:649px;background:transparent">6 μs</div>
<div class="vl xl" style="left:662px;top:649px;background:transparent">8 μs</div>
<div class="vl xl" style="left:761.5px;top:649px;background:transparent">10 μs</div>
<div class="vl xl" style="left:861.5px;top:649px;background:transparent">12 μs</div>
<div class="vl xl" style="left:962px;top:649px;background:transparent">14 μs</div>
<div class="vl xl" style="left:996px;top:649px;background:transparent">15 μs</div>

<!-- channel markers -->
<svg class="abs" style="left:11px;top:230px" width="40" height="20" viewBox="0 0 40 20"><path d="M1.5 2.5 H19 L23 9.3 L19 16 H1.5 Z" fill="rgba(12,12,0,0.92)" stroke="#f0e850" stroke-width="1.1"/><text x="3.5" y="13.3" font-family="Liberation Sans" font-size="11" fill="#f0e850">C1</text></svg>
<svg class="abs" style="left:11px;top:353px" width="40" height="20" viewBox="0 0 40 20"><path d="M1.5 2.2 H29 L36 9.4 L29 16.6 H1.5 Z" fill="rgba(0,12,0,0.92)" stroke="#40e040" stroke-width="1.1"/><text x="20.5" y="13.8" text-anchor="middle" font-family="Liberation Sans" font-size="11.5" fill="#40e040">C2</text></svg>
<svg class="abs" style="left:11px;top:601px" width="40" height="20" viewBox="0 0 40 20"><path d="M1.5 2.3 H24 L31 9.4 L24 16.5 H1.5 Z" fill="rgba(15,20,50,0.55)" stroke="#5a78e8" stroke-width="1.1"/><text x="17" y="13.8" text-anchor="middle" font-family="Liberation Sans" font-size="11.5" fill="#5a78e8">C4</text></svg>
<div class="abs" style="left:101px;top:243px;font-size:16px;color:#30d030;letter-spacing:0.8px">SW2</div>
<div class="abs" style="left:25px;top:313px;font-size:16px;color:#e6e68a;letter-spacing:0.8px">SW1</div>
<svg class="abs" style="left:61px;top:525px" width="18" height="14" viewBox="0 0 18 14"><path d="M1.5 1H6.5M4 1V12.5M1.5 12.5H6.5M9 1V12.5H16.5" fill="none" stroke="#4a68e8" stroke-width="1.3"/></svg>

<!-- right overlay -->

<!-- meas panel -->
<div class="abs" style="left:12px;top:684px;width:1000px;height:39px;border:1px solid #b4b8b8;background:#3a3f40"></div>
<div class="abs" style="left:14px;top:688px;font-size:12px;font-weight:bold;color:#f0f0f0;letter-spacing:1.05px">Meas Group 1</div>
<div class="abs" style="left:122px;top:687px;width:13px;height:13px;background:#f0e800;border-radius:2px;font-size:7px;color:#333;line-height:13px;text-align:center">C1</div>
<div class="abs" style="left:14px;top:703px;width:106px;height:17px;background:#444648;font-size:12px;font-weight:bold;color:#f0f0f0;padding-left:2px;line-height:19px;letter-spacing:0.5px">High</div>
<div class="abs" style="left:120px;top:703px;width:103px;height:17px;background:#c8c8c8;font-size:12.5px;font-weight:bold;color:#101010;text-align:right;padding-right:1px;line-height:19px;letter-spacing:1.9px">34.628 V</div>


<div class="abs" style="left:917px;top:200px;width:107px;height:524px;background:rgba(72,72,72,0.5)"></div>
<div class="abs" style="left:914px;top:200px;width:3px;height:525px;background:#a0a0a0"></div>
<!-- horizontal panel -->
<div class="abs" style="left:867px;top:49px;width:160px;height:152px;background:rgba(72,72,72,0.93);border-left:3px solid #e8e8e8;border-bottom:2px solid #e8e8e8;border-top:1px solid #9a9a9a;border-bottom-left-radius:7px"></div>
<div class="abs" style="left:869px;top:50px;width:155px;height:18px;background:#080808"></div>
<div class="panel" style="left:876px;top:49.8px;font-size:16.5px;color:#fafafa;letter-spacing:1.8px">Horizontal</div>
<div class="panel" style="left:871px;top:69px;color:#e4e4e4;letter-spacing:1.25px">200 ps</div>
<div class="panel" style="right:3px;top:69px;color:#e4e4e4;letter-spacing:1.25px">5 GSa/</div>
<div class="panel" style="left:871px;top:87px;color:#9a9a9a;letter-spacing:1.25px">100 kSa</div>
<div class="panel" style="right:4px;top:87px;color:#f0f0f0;letter-spacing:1.25px">RT</div>
<div class="panel" style="left:871px;top:105px;color:#e4e4e4;letter-spacing:1.25px">2 μs/div</div>
<div class="panel" style="left:871px;top:123px;color:#e4e4e4;letter-spacing:1.25px">0 s</div>
<div class="abs" style="left:928px;top:129px;width:43px;height:4px;background:rgba(150,145,70,0.38)"></div>
<div class="abs" style="left:869px;top:141px;width:155px;height:1px;background:#8a8a8a"></div>
<div class="abs" style="left:869px;top:142px;width:155px;height:17px;background:#080808"></div>
<div class="panel" style="left:877px;top:140.7px;font-size:16.5px;color:#fafafa;letter-spacing:1.9px">Trigger</div>
<div class="panel" style="right:3px;top:140.7px;font-size:16.5px;color:#f0b848;letter-spacing:1.25px">Auto</div>
<div class="abs" style="left:869px;top:159px;width:155px;height:1px;background:#8a8a8a"></div>
<div class="panel" style="left:871px;top:160.3px;color:#e4e4e4;letter-spacing:1px">Edge</div>
<svg class="abs" style="left:915px;top:160px" width="22" height="18" viewBox="0 0 22 18"><path d="M1 16.3H11V1.5H18.7" fill="none" stroke="#e8e8e8" stroke-width="1.2"/><path d="M6.6 12L11 3.4L14.8 12" fill="none" stroke="#e8e8e8" stroke-width="1.2"/></svg>
<div class="panel" style="left:940px;top:160.3px;color:#f0ec40;letter-spacing:1.25px">Ch1</div>
<div class="panel" style="left:871px;top:179px;color:#e4e4e4;letter-spacing:1.3px">21.677 V</div>

<div class="abs" style="left:993px;top:165px;width:18px;height:12px;border:1px solid rgba(90,150,150,0.3);border-radius:5px"></div>
<!-- channel boxes -->
<div class="abs" style="left:892px;top:224px;width:120px;height:94px;border:2px solid #f0f000;border-radius:7px;background:#1e1c08;overflow:hidden"><div style="height:18px;background:#f0f000"></div></div>
<div class="panel" style="left:921px;top:225px;font-size:16.5px;color:#101010;letter-spacing:0.8px">Ch1</div>
<div class="abs" style="left:982px;top:227px;width:26px;height:15px;border-radius:6px;background:linear-gradient(#8aa8f4,#3a5ee0 55%,#2646c0);border:2px solid #2c343c"><div style="position:absolute;left:7px;top:5px;width:11px;height:3px;background:#f4f8ff;border-radius:1px"></div></div>
<div class="panel" style="left:897px;top:247px;color:#f0f0f0;letter-spacing:1.25px">20 V/div</div>
<div class="panel" style="left:897px;top:264px;color:#f0f0f0;letter-spacing:1.25px">1.98 div</div>
<div class="panel" style="left:897px;top:281px;color:#a8a8a8;letter-spacing:1.25px">-80 mV</div>
<div class="panel" style="left:897px;top:298px;color:#f0f0f0;letter-spacing:1.25px">DC 1MΩ</div>

<div class="abs" style="left:892px;top:341px;width:120px;height:92px;border:2px solid #8a8a8a;border-radius:7px;background:#050505;overflow:hidden"><div style="height:18px;background:#20e820"></div></div>
<div class="panel" style="left:921px;top:341px;font-size:16.5px;color:#103010;letter-spacing:0.8px">Ch2</div>
<div class="abs" style="left:982px;top:343px;width:26px;height:15px;border-radius:6px;background:linear-gradient(#8aa8f4,#3a5ee0 55%,#2646c0);border:2px solid #2c343c"><div style="position:absolute;left:7px;top:5px;width:11px;height:3px;background:#f4f8ff;border-radius:1px"></div></div>
<div class="panel" style="left:897px;top:363px;color:#f0f0f0;letter-spacing:1.25px">10 V/div</div>
<div class="panel" style="left:897px;top:380px;color:#f0f0f0;letter-spacing:1.25px">0 div</div>
<div class="panel" style="left:897px;top:397px;color:#a8a8a8;letter-spacing:1.25px">0 V</div>
<div class="panel" style="left:897px;top:414px;color:#f0f0f0;letter-spacing:1.25px">DC 1MΩ</div>

<div class="abs" style="left:892px;top:457px;width:120px;height:92px;border:2px solid #8a8a8a;border-radius:7px;background:#050505;overflow:hidden"><div style="height:19px;background:#3864f0"></div></div>
<div class="panel" style="left:921px;top:457.5px;font-size:16.5px;color:#0a1a60;letter-spacing:0.8px">Ch4</div>
<div class="abs" style="left:982px;top:459px;width:26px;height:15px;border-radius:6px;background:linear-gradient(#8aa8f4,#3a5ee0 55%,#2646c0);border:2px solid #2c343c"><div style="position:absolute;left:7px;top:5px;width:11px;height:3px;background:#f4f8ff;border-radius:1px"></div></div>
<div class="panel" style="left:897px;top:479.5px;color:#f0f0f0;letter-spacing:1.25px">4 A/div</div>
<div class="panel" style="left:897px;top:496.5px;color:#f0f0f0;letter-spacing:1.25px">-4.02 div</div>
<div class="panel" style="left:897px;top:513.5px;color:#a8a8a8;letter-spacing:1.25px">0 A</div>
<div class="panel" style="left:897px;top:530.5px;color:#f0f0f0;letter-spacing:1.25px">DC 1MΩ</div>


<div class="abs" style="left:498px;top:677px;width:26px;height:3px;background:#9a9a9a;border-radius:1px"></div>
<!-- menu -->
<div id="menu"></div>
<svg class="abs" style="left:2px;top:733px" width="40" height="26" viewBox="0 0 40 26"><g fill="#f4f6f8"><rect x="1" y="1" width="11" height="11" rx="2"/><rect x="14" y="1" width="11" height="11" rx="2"/><rect x="27" y="1" width="11" height="11" rx="2"/><rect x="1" y="14" width="11" height="11" rx="2"/><rect x="14" y="14" width="11" height="11" rx="2"/><rect x="27" y="14" width="11" height="11" rx="2"/></g></svg>
<div class="ms" style="left:48px"></div>
<div class="mi" style="left:53px">File</div>
<div class="ms" style="left:96px"></div>
<div class="mi" style="left:101px;letter-spacing:1px">Horizontal</div>
<div class="ms" style="left:208px"></div>
<div class="mi" style="left:213px">Trigger</div>
<div class="ms" style="left:290px"></div>
<div class="mi" style="left:294px">Vertical</div>
<div class="ms" style="left:375px"></div>
<div class="mi" style="left:379px">Math</div>
<div class="ms" style="left:435px"></div>
<div class="mi" style="left:439px">Cursor</div>
<div class="ms" style="left:511px"></div>
<div class="mi" style="left:516px">Meas</div>
<div class="ms" style="left:574px"></div>
<div class="mi" style="left:578px">Masks</div>
<div class="ms" style="left:645px"></div>
<div class="mi" style="left:649px">Analysis</div>
<div class="ms" style="left:738px"></div>
<div class="mi" style="left:743px">Display</div>
</body></html>
